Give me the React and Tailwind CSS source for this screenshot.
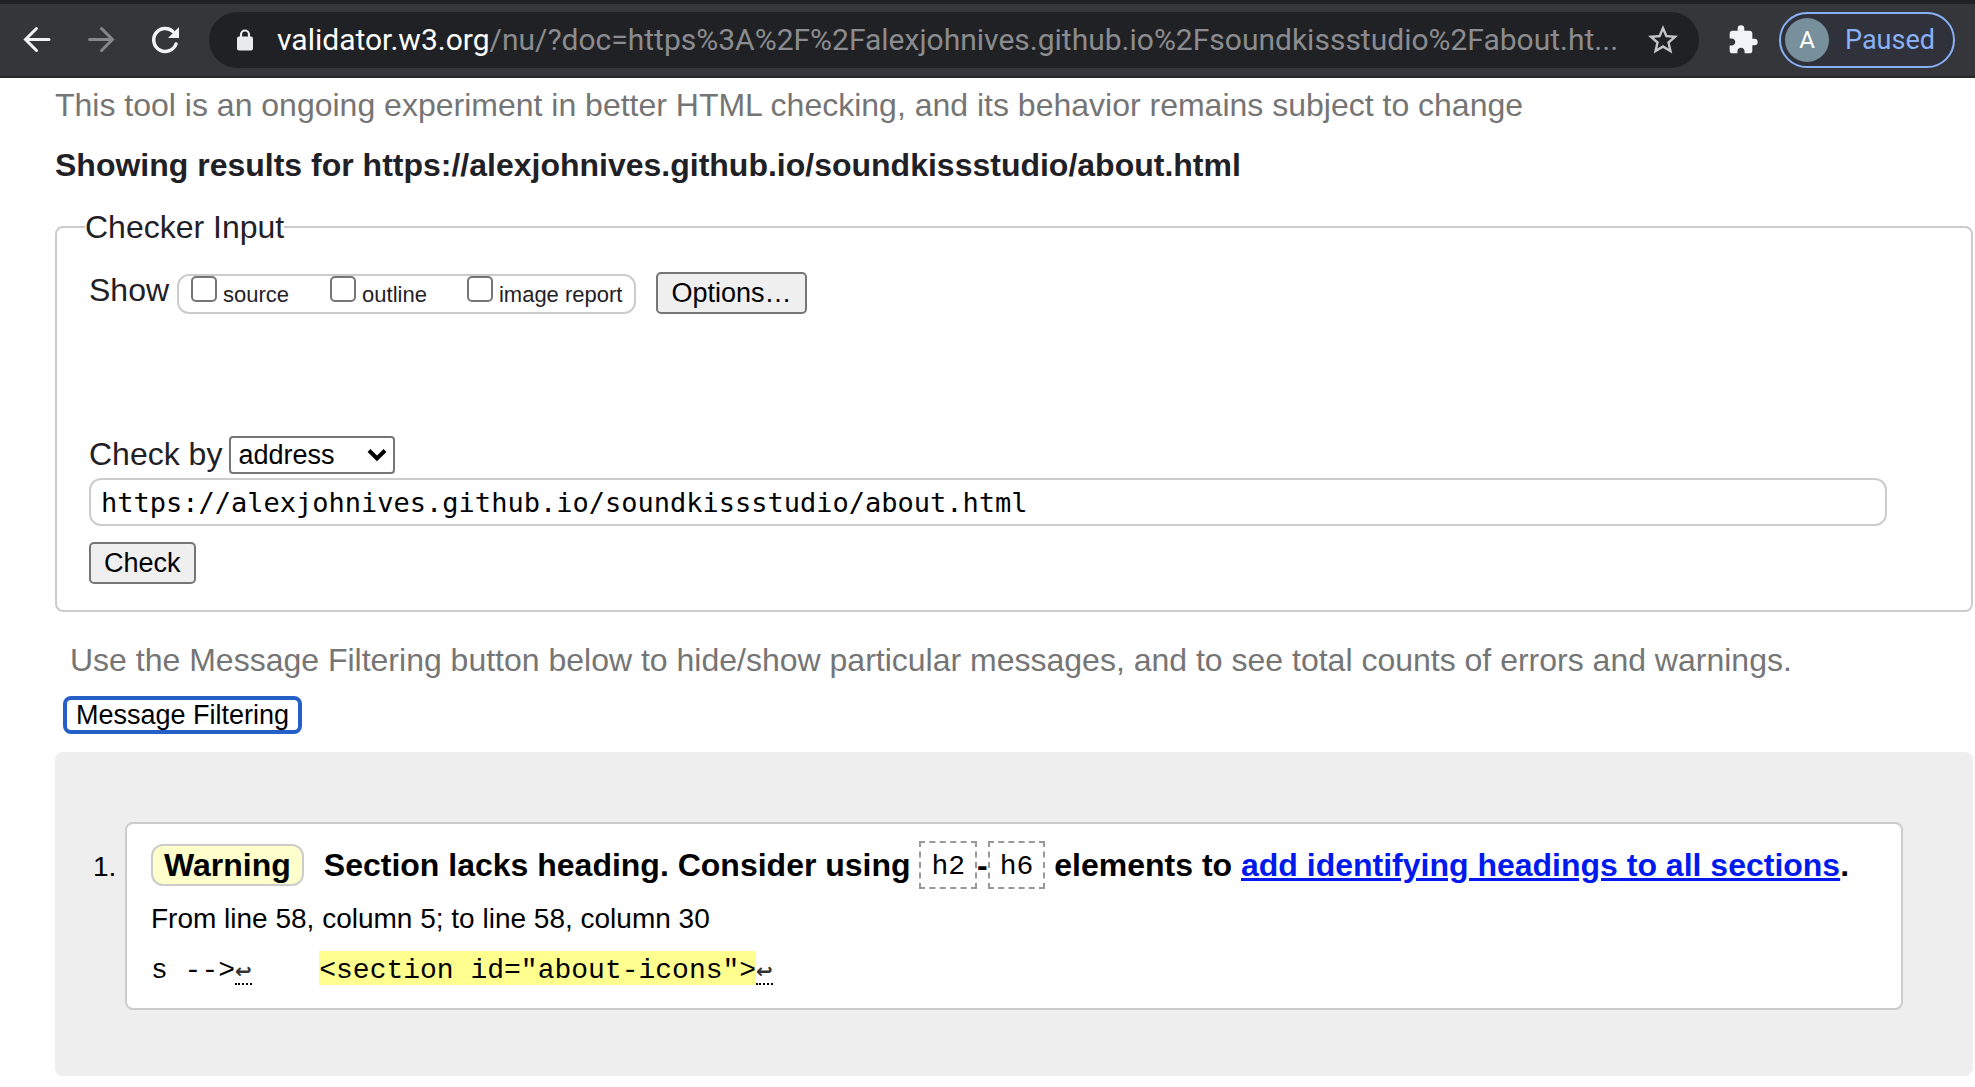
const btn = "h-[42px] rounded-[5px] border-2 border-[#767676] bg-[#efefef] px-[13px] text-[27px] leading-8 text-black";
const tag = "flex h-12 items-center border-2 border-dashed border-[#999] px-2.5 pt-1 font-['Liberation_Mono',monospace] text-[28px] font-normal";

function Toolbar() {
  return (
    <header className="flex items-center h-[78px] border-t-4 border-t-[#202124] border-b-2 border-b-[#27282b] bg-[#35363a] pl-[18px] pr-5 font-[Roboto,sans-serif]">
      <button aria-label="Back" className="w-10 h-10 shrink-0">
        <svg viewBox="0 0 40 40" className="w-10 h-10" fill="none" stroke="#f1f3f4" strokeWidth="3" strokeLinecap="round">
          <path d="M31 19.500H8M18.500 8.500l-11 11 11 11" />
        </svg>
      </button>
      <button aria-label="Forward" className="ml-6 w-10 h-10 shrink-0">
        <svg viewBox="0 0 40 40" className="w-10 h-10" fill="none" stroke="#86878a" strokeWidth="3" strokeLinecap="round">
          <path d="M7.500 19.500h23M19.500 8.500l11 11-11 11" />
        </svg>
      </button>
      <button aria-label="Reload" className="ml-6 w-10 h-10 shrink-0">
        <svg viewBox="0 0 40 40" className="w-10 h-10" fill="none" stroke="#f1f3f4" strokeWidth="3.500" strokeLinecap="round">
          <path d="M30 24A11.500 11.500 0 1 1 27 11.500" />
          <path d="M33 7v11H22z" fill="#f1f3f4" stroke="none" />
        </svg>
      </button>
      <div className="ml-[23px] flex h-14 min-w-0 flex-1 items-center rounded-full bg-[#202124] pl-7 pr-[18px]">
        <svg viewBox="0 0 16 22" className="w-4 h-[22px] shrink-0">
          <path d="M4 9V5.500a4 4 0 0 1 8 0V9" fill="none" stroke="#e8eaed" strokeWidth="2.200" />
          <rect x="0" y="7.500" width="16" height="14" rx="2" fill="#e8eaed" />
        </svg>
        <div className="ml-6 min-w-0 flex-1 truncate text-[30px] leading-10 text-[#8b8c8f]">
          <span className="text-white">validator.w3.org</span>/nu/?doc=https%3A%2F%2Falexjohnives.github.io%2Fsoundkissstudio%2Fabout.ht...
        </div>
        <button aria-label="Bookmark this page" className="ml-5 shrink-0">
          <svg viewBox="0 0 24 24" className="w-9 h-9" fill="#c4c5c6">
            <path d="M22 9.240l-7.190-.62L12 2 9.190 8.630 2 9.240l5.460 4.730L5.820 21 12 17.270 18.180 21l-1.630-7.030L22 9.240zM12 15.400l-3.760 2.270 1-4.280-3.320-2.880 4.380-.38L12 6.100l1.710 4.040 4.380.38-3.320 2.880 1 4.280L12 15.400z" />
          </svg>
        </button>
      </div>
      <button aria-label="Extensions" className="ml-7 shrink-0">
        <svg viewBox="0 0 24 24" className="w-8 h-8" fill="#f1f3f4">
          <path d="M20.500 11H19V7c0-1.100-.9-2-2-2h-4V3.500a2.500 2.500 0 0 0-5 0V5H4c-1.100 0-1.990.9-1.990 2v3.800H3.500c1.490 0 2.700 1.210 2.700 2.700s-1.210 2.700-2.700 2.700H2V20c0 1.100.9 2 2 2h3.800v-1.500c0-1.490 1.210-2.700 2.700-2.700s2.700 1.210 2.700 2.700V22H17c1.100 0 2-.9 2-2v-4h1.500a2.500 2.500 0 0 0 0-5z" />
        </svg>
      </button>
      <button className="ml-5 flex h-14 shrink-0 items-center rounded-full border-2 border-[#8ab0f6] bg-[#2f323b] pl-1 pr-[18px] text-[27px] text-[#8ab0f6]">
        <span className="flex h-11 w-11 items-center justify-center rounded-full bg-[#78909c] text-2xl text-white">A</span>
        <span className="ml-4">Paused</span>
      </button>
    </header>
  );
}

function ShowOption({ id, label, gap }) {
  return (
    <span className={"flex items-start " + gap}>
      <input id={id} type="checkbox" className="h-[26px] w-[26px] shrink-0 appearance-none rounded-[5px] border-2 border-[#767676] bg-white" />
      <label htmlFor={id} className="ml-1.5 mt-[7px] text-[22px] leading-6">{label}</label>
    </span>
  );
}

function Newline() {
  return (
    <span title="newline" className="w-[17px] border-b-2 border-dotted border-black pt-2 font-['DejaVu_Sans',sans-serif] text-[20px] font-bold text-[#333]">↩</span>
  );
}

export default function App() {
  return (
    <div className="min-h-screen bg-white font-['Liberation_Sans',Arial,sans-serif] text-[#1f2126]">
      <Toolbar />
      <main className="pl-[55px] pr-0.5">
        <p className="pt-[7px] text-[32px] leading-10 text-[#757575]">
          This tool is an ongoing experiment in better HTML checking, and its behavior remains subject to change
        </p>
        <h1 className="mt-5 text-[32px] font-bold leading-10">
          Showing results for https://alexjohnives.github.io/soundkissstudio/about.html
        </h1>
        <fieldset className="mt-[22px] rounded-lg border-2 border-[#ccc] pl-8 pr-[84px] pb-[26px]">
          <legend className="-ml-1 text-[32px] leading-10">Checker Input</legend>
          <div className="mt-[23px] flex items-end">
            <span className="pb-1 text-[32px] leading-10">Show</span>
            <div className="ml-2 flex h-10 rounded-xl border-2 border-[#ccc] px-3">
              <ShowOption id="show-source" label="source" gap="" />
              <ShowOption id="show-outline" label="outline" gap="ml-[41px]" />
              <ShowOption id="show-image" label="image report" gap="ml-10" />
            </div>
            <button className={btn + " ml-5"}>Options…</button>
          </div>
          <div className="mt-[120px] flex items-end">
            <label htmlFor="check-by" className="text-[32px] leading-10">Check by</label>
            <span className="relative ml-[7px]">
              <select id="check-by" className="block h-[38px] w-[166px] appearance-none rounded border-2 border-[#767676] bg-white pl-[7px] text-[27px] leading-8 text-black">
                <option>address</option>
              </select>
              <svg viewBox="0 0 20 14" className="pointer-events-none absolute right-2 top-3 h-3.5 w-5" fill="none" stroke="#000" strokeWidth="4">
                <path d="M2 2.500l8 8 8-8" />
              </svg>
            </span>
          </div>
          <input aria-label="Address" defaultValue="https://alexjohnives.github.io/soundkissstudio/about.html" className="mt-1 block h-12 w-full rounded-xl border-2 border-[#ccc] px-2.5 font-['DejaVu_Sans_Mono',monospace] text-[27px] text-black" />
          <button className={btn + " mt-4 block"}>Check</button>
        </fieldset>
        <p className="ml-[15px] mt-7 text-[32px] leading-10 text-[#757575]">
          Use the Message Filtering button below to hide/show particular messages, and to see total counts of errors and warnings.
        </p>
        <button className="ml-2 mt-4 block h-[38px] rounded-lg border-4 border-[#2560c8] bg-white px-[9px] text-[27px] leading-7 text-black">Message Filtering</button>
        <ol className="mt-[18px] rounded-lg bg-[#eee] pb-[66px] pl-[38px] pr-[70px] pt-[70px] text-black">
          <li className="flex">
            <span className="mt-[29px] w-8 shrink-0 text-[28px] leading-8">1.</span>
            <div className="h-[188px] min-w-0 flex-1 rounded-lg border-2 border-[#ccc] bg-white px-6 pt-[15px]">
              <p className="flex h-[52px] items-center whitespace-pre text-[32px] font-bold leading-10">
                <strong className="mr-5 flex h-[42px] items-center rounded-xl border-2 border-[#ccc] bg-[#ffffcc] px-[11px]">Warning</strong>
                <span>Section lacks heading. Consider using </span>
                <code className={tag}>h2</code>
                <span>-</span>
                <code className={tag}>h6</code>
                <span> elements to <a href="#headings" className="text-[#001aee] underline">add identifying headings to all sections</a>.</span>
              </p>
              <p className="mt-2 text-[28px] leading-10">From line 58, column 5; to line 58, column 30</p>
              <p className="mt-3 flex whitespace-pre font-['Liberation_Mono',monospace] text-[28px] leading-6">
                <code className="pt-2 font-[inherit]">{"s -->"}</code>
                <Newline />
                <code className="pt-2 font-[inherit]">{"    "}</code>
                <code className="bg-[#ffff90] pt-2 font-[inherit]">{'<section id="about-icons">'}</code>
                <Newline />
              </p>
            </div>
          </li>
        </ol>
      </main>
    </div>
  );
}
